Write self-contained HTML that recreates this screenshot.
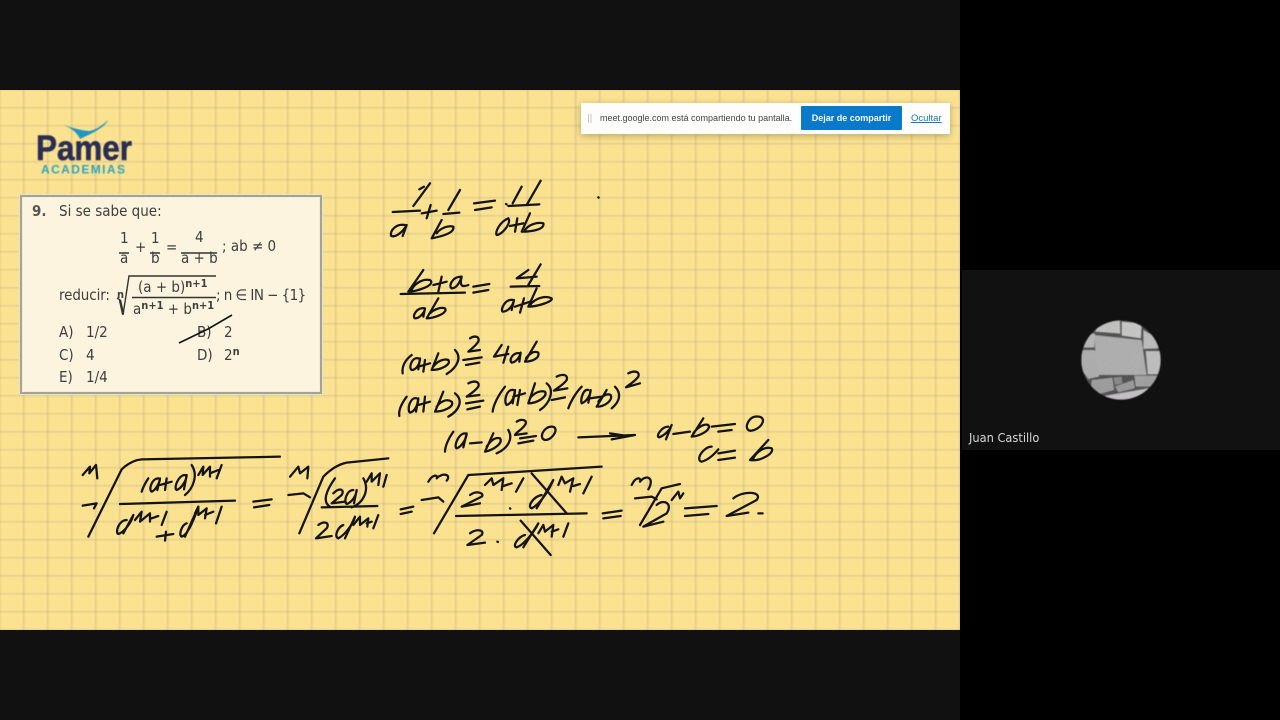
<!DOCTYPE html>
<html lang="es">
<head>
<meta charset="utf-8">
<title>Pamer</title>
<style>
html,body{margin:0;padding:0;width:1280px;height:720px;overflow:hidden;background:#000}
#stage{position:absolute;left:0;top:0;width:1280px;height:720px;background:#000;overflow:hidden}
.abs{position:absolute}
#topbar{left:0;top:0;width:960px;height:90px;background:#111}
#botbar{left:0;top:630px;width:960px;height:90px;background:#111}
#slide{left:0;top:90px;width:960px;height:540px;overflow:hidden;background:#fbe291}
#grid{position:absolute;left:-24px;top:-18px;width:1008px;height:576px;
background-image:linear-gradient(to right,rgba(165,150,125,.3) 0,rgba(165,150,125,.3) 1.500px,transparent 1.500px),linear-gradient(to bottom,rgba(165,150,125,.24) 0,rgba(165,150,125,.24) 1.500px,transparent 1.500px);
background-size:24px 18px;background-position:-1px -1px;filter:blur(.6px)}
#card{left:20px;top:195px;width:298px;height:195px;background:#fcf4de;border:2.500px solid #a4a496;box-shadow:0 0 0 1px #e6e2cc,inset 0 0 0 1px #efeeda}
.t{position:absolute;font-family:"DejaVu Sans Condensed","DejaVu Sans","Liberation Sans",sans-serif;font-stretch:condensed;color:#3e3e3e;font-size:15px;line-height:18px;white-space:nowrap;filter:blur(.35px)}
.sm{font-size:11px;font-weight:bold}
#bar{left:581px;top:103px;width:369px;height:31px;background:#fdfdfb;box-shadow:0 2px 7px rgba(90,80,40,.4);filter:blur(.2px)}
#btn{left:801px;top:106px;width:101px;height:24px;background:#0a79c9;border-radius:1px;color:#f4f8fc;font:bold 9px/24px "Liberation Sans",sans-serif;text-align:center;filter:blur(.2px)}
#msg{left:600px;top:112px;color:#444;font:9px/13px "Liberation Sans",sans-serif;white-space:nowrap;filter:blur(.2px)}
#oc{left:911px;top:112px;color:#1a78b8;font:9.500px/13px "Liberation Sans",sans-serif;text-decoration:underline;filter:blur(.2px)}
#panel{left:962px;top:270px;width:318px;height:180px;background:#111}
#name{left:969px;top:429px;color:#d8d8d8;font:12.700px/17px "DejaVu Sans Condensed","DejaVu Sans","Liberation Sans",sans-serif;font-stretch:condensed;white-space:nowrap;filter:blur(.25px)}
svg{position:absolute;left:0;top:0}
.ink path{fill:none;stroke:#141414;stroke-width:6.8;stroke-linecap:round;stroke-linejoin:round}
</style>
</head>
<body>
<div id="stage">
<div class="abs" id="topbar"></div>
<div class="abs" id="botbar"></div>
<div class="abs" id="slide"><div id="grid"></div></div>

<svg width="1280" height="720" viewBox="0 0 1280 720" style="filter:blur(.4px)">
  <path d="M63 125 C73 128 83 131 90 131 C97 129 103 125 108 120 C105 127 95 132 80 139 C77 132 71 128 63 125Z" fill="#2196c4"/>
  <text x="36" y="160" font-family="Liberation Sans,sans-serif" font-weight="bold" font-size="35" fill="#2a2e54" textLength="96" lengthAdjust="spacingAndGlyphs" stroke="#2a2e54" stroke-width=".6">Pamer</text>
  <text x="41" y="173.500" font-family="Liberation Sans,sans-serif" font-weight="bold" font-size="12" fill="#2ba4c6" textLength="84" lengthAdjust="spacing">ACADEMIAS</text>
</svg>

<div class="abs" id="card"></div>
<div class="t" style="left:32px;top:202px;font-weight:bold;color:#555">9.</div>
<div class="t" style="left:59px;top:202px">Si se sabe que:</div>
<div class="t" style="left:120px;top:229px">1</div>
<div class="t" style="left:120px;top:249px">a</div>
<div class="t" style="left:135px;top:238px">+</div>
<div class="t" style="left:151px;top:229px">1</div>
<div class="t" style="left:151px;top:249px">b</div>
<div class="t" style="left:166px;top:238px">=</div>
<div class="t" style="left:195px;top:228px">4</div>
<div class="t" style="left:181px;top:249px">a + b</div>
<div class="t" style="left:222px;top:237px">; ab ≠ 0</div>
<div class="t" style="left:59px;top:286px;letter-spacing:-.1px">reducir:</div>
<div class="t" style="left:138px;top:278px">(a + b)<span class="sm" style="position:relative;top:-5px">n+1</span></div>
<div class="t" style="left:133px;top:300px">a<span class="sm" style="position:relative;top:-5px">n+1</span> + b<span class="sm" style="position:relative;top:-5px">n+1</span></div>
<div class="t sm" style="left:117px;top:286px">n</div>
<div class="t" style="left:216px;top:286px;letter-spacing:-.55px">; n ∈ IN − {1}</div>
<div class="t" style="left:59px;top:323px">A)</div><div class="t" style="left:86px;top:323px">1/2</div>
<div class="t" style="left:197px;top:323px">B)</div><div class="t" style="left:224px;top:323px">2</div>
<div class="t" style="left:59px;top:346px">C)</div><div class="t" style="left:86px;top:346px">4</div>
<div class="t" style="left:197px;top:346px">D)</div><div class="t" style="left:224px;top:346px">2<span class="sm" style="position:relative;top:-5px">n</span></div>
<div class="t" style="left:59px;top:368px">E)</div><div class="t" style="left:86px;top:368px">1/4</div>

<svg width="1280" height="720" viewBox="0 0 1280 720" style="filter:blur(.3px)">
  <g fill="none" stroke="#333" stroke-width="1.4">
    <path d="M119 253H129M150 253H160M181 253H217"/>
    <path d="M117 298 L120 300 L123 315 L129 276 H216"/>
    <path d="M132 297.500H216"/>
  </g>
  <path d="M120 300 L123 314" fill="none" stroke="#333" stroke-width="2.4"/>
  <path d="M179 343 L208 329 L232 315" fill="none" stroke="#141414" stroke-width="1.6"/>
</svg>

<!-- Handwriting, upper block -->
<svg class="ink" width="1280" height="720" viewBox="0 0 1280 720" style="filter:blur(.35px)">
<g transform="translate(380 170) scale(.33333)">
  <path d="M150 40 L100 108 M132 50 L118 58"/>
  <path d="M38 126 L120 122"/>
  <path d="M75 165 C50 160 30 180 33 197 C45 205 70 185 80 165 L68 198"/>
  <path d="M125 130 L170 122 M152 105 L140 145"/>
  <path d="M240 60 L205 120 M190 132 L238 128"/>
  <path d="M185 150 L155 205 C180 200 225 190 220 170 C205 165 180 175 170 190"/>
  <path d="M282 100 L345 92 M285 120 L335 112"/>
  <path d="M378 102 L380 103"/>
  <path d="M425 50 L398 100 M482 32 L440 105 M385 108 L478 103"/>
  <path d="M385 145 C360 155 345 185 350 195 C365 195 395 160 385 145"/>
  <path d="M390 168 L430 160 M412 145 L405 185"/>
  <path d="M450 130 L425 185 C450 185 495 180 490 160 C470 155 445 165 435 180"/>
  <path d="M655 82 L656 83"/>

  <path d="M130 300 L85 365 C110 365 170 345 150 330 C125 325 100 345 95 360"/>
  <path d="M160 345 L200 335 M185 320 L175 365"/>
  <path d="M245 320 C215 320 205 350 215 355 C230 355 240 335 245 320 C240 340 240 355 265 345"/>
  <path d="M62 372 L255 368"/>
  <path d="M135 415 C110 410 95 440 105 445 C120 445 135 425 135 415 L130 440"/>
  <path d="M175 385 L140 445 C160 445 205 430 195 415 C180 410 160 420 150 430"/>
  <path d="M280 350 L328 342 M280 368 L325 360"/>
  <path d="M445 300 L410 325 L470 320 M482 283 L445 345 M392 350 L478 348"/>
  <path d="M400 390 C375 385 360 420 368 425 C385 425 400 405 402 390 L395 420"/>
  <path d="M405 410 L450 395 M432 385 L420 428"/>
  <path d="M470 355 L445 410 C470 410 520 395 515 385 C495 375 465 385 450 405"/>

  <path d="M95 555 C75 570 65 590 68 610"/>
  <path d="M115 565 C95 560 85 595 95 600 C110 600 120 580 120 565 L115 598"/>
  <path d="M115 590 L150 580 M135 570 L130 605"/>
  <path d="M175 550 L155 600 C180 600 215 585 205 570 C190 565 170 575 160 590"/>
  <path d="M225 540 C245 560 235 590 200 612"/>
  <path d="M270 505 C285 495 300 500 295 515 C285 530 270 540 265 545 L300 540"/>
  <path d="M250 570 L305 562 M258 585 L298 578"/>
  <path d="M365 525 L342 560 L385 552 M385 530 L370 578"/>
  <path d="M420 550 C400 545 385 570 395 578 C410 575 420 560 422 548 L418 575"/>
  <path d="M470 515 L435 575 C455 575 480 565 475 548 C460 540 445 555 438 565"/>

  <path d="M80 680 C65 700 55 720 58 738"/>
  <path d="M110 685 C90 680 80 720 90 728 C105 725 115 700 115 685 L108 725"/>
  <path d="M115 705 L150 695 M135 680 L130 725"/>
  <path d="M190 665 L165 725 C190 725 225 710 215 695 C200 685 180 695 170 710"/>
  <path d="M225 670 C250 690 240 720 205 740"/>
  <path d="M265 640 C285 630 300 635 295 650 C285 665 265 675 260 680 L298 675"/>
  <path d="M258 700 L310 692 M262 718 L300 710"/>
  <path d="M375 650 C355 675 340 705 338 725"/>
  <path d="M400 660 C380 655 370 695 380 705 C395 700 405 680 405 660 L398 700"/>
  <path d="M400 680 L435 670 M420 660 L412 705"/>
  <path d="M465 640 L445 700 C470 700 505 680 495 665 C480 660 460 670 450 685"/>
  <path d="M500 640 C525 660 510 700 480 720"/>
  <path d="M530 620 C550 610 565 615 560 630 C550 645 530 655 522 662 L562 655"/>
  <path d="M515 690 L555 682"/>
  <path d="M605 650 C585 670 570 700 565 715"/>
  <path d="M625 660 C610 655 600 690 605 700 C620 695 632 675 632 660 L625 698"/>
  <path d="M630 685 L665 680"/>
  <path d="M680 660 L650 710 C675 710 700 690 692 675 C680 668 665 680 655 695"/>
  <path d="M705 650 C725 670 720 695 695 715"/>
  <path d="M745 610 C765 600 780 605 775 620 C765 635 745 645 738 652 L780 640"/>
</g>

<!-- Bottom left roots -->
<g transform="translate(70 410) scale(.33333)">
  <path d="M38 195 L60 170 L58 190 L78 165 L82 205"/>
  <path d="M38 287 L80 280 L72 295"/>
  <path d="M55 380 L155 178 Q185 150 215 148 L630 140"/>
  <path d="M235 205 C225 220 218 235 215 245"/>
  <path d="M265 205 C245 205 235 240 245 245 C258 240 270 215 270 205 L262 240"/>
  <path d="M270 225 L305 215 M290 205 L285 240"/>
  <path d="M345 195 C325 195 310 235 320 240 C335 235 350 210 350 195 L342 238"/>
  <path d="M365 165 C385 195 370 235 345 255"/>
  <path d="M385 195 L400 170 L398 195 L420 170 L420 200 M420 190 L445 180 M455 165 L440 205"/>
  <path d="M150 282 L495 272"/>
  <path d="M170 330 C145 330 135 370 145 372 C165 365 185 335 190 315 L160 370"/>
  <path d="M195 330 L215 305 L210 335 L240 310 L240 335 M245 325 L265 318 M290 305 L275 345"/>
  <path d="M260 380 L310 372 M288 365 L285 392"/>
  <path d="M350 340 C335 345 325 375 335 380 C355 375 375 320 385 290 L345 380"/>
  <path d="M375 310 L385 290 L385 315 L410 295 L405 325 M405 315 L430 305 M455 290 L438 340"/>
  <path d="M550 275 L605 268 M552 292 L598 285"/>

  <path d="M660 200 L685 170 L690 190 L715 170 L712 205"/>
  <path d="M655 255 L700 250 L720 262"/>
  <path d="M688 370 L760 200 Q795 165 830 158 L955 145"/>
  <path d="M795 205 C770 240 755 275 780 290"/>
  <path d="M790 250 C810 230 825 240 815 255 L785 280 L825 275"/>
  <path d="M850 240 C830 240 820 275 830 282 C845 278 860 255 860 240 L852 280"/>
  <path d="M880 205 C900 240 880 280 845 292"/>
  <path d="M890 215 L905 190 L905 215 L930 190 L925 225 M950 195 L940 230"/>
  <path d="M755 292 L922 288"/>
  <path d="M745 345 C765 330 780 340 770 355 L738 385 L785 378"/>
  <path d="M820 345 C805 350 790 380 805 385 C825 375 850 340 855 320 L825 385"/>
  <path d="M850 345 L870 320 L870 345 L895 325 L892 350 M890 340 L905 335 M925 315 L910 355"/>
  <path d="M992 298 L1030 290 M992 312 L1025 305"/>
</g>

<!-- Bottom right -->
<g transform="translate(410 410) scale(.33333)">
  <path d="M130 65 C115 85 105 110 105 125"/>
  <path d="M165 70 C145 70 130 110 140 115 C155 110 170 85 170 70 L160 112"/>
  <path d="M180 100 L215 97"/>
  <path d="M250 70 L225 125 C250 120 280 100 270 85 C255 80 240 95 230 110"/>
  <path d="M295 60 C310 85 295 115 260 130"/>
  <path d="M320 35 C335 25 355 30 345 45 C335 60 320 65 315 75 L350 70"/>
  <path d="M330 85 L378 78 M325 100 L370 92"/>
  <path d="M425 50 C400 50 385 85 405 90 C430 90 450 50 425 50"/>
  <path d="M505 82 L675 75 L605 88 M600 70 L640 76"/>
  <path d="M775 50 C755 50 735 80 748 82 C765 75 780 60 785 45 L768 88"/>
  <path d="M790 72 L840 65"/>
  <path d="M880 25 L845 80 C870 78 905 60 895 45 C880 40 860 55 850 70"/>
  <path d="M905 50 L975 42 M925 65 L965 60"/>
  <path d="M1035 20 C1010 25 1000 65 1025 62 C1060 55 1075 15 1035 20"/>
  <path d="M905 110 C880 110 855 150 875 155 C895 150 915 130 925 118"/>
  <path d="M925 130 L975 122 M925 150 L975 143"/>
  <path d="M1075 90 L1020 150 C1050 155 1095 130 1085 115 C1065 108 1040 125 1030 145"/>

  <path d="M55 215 C70 190 85 195 80 205 C100 185 125 195 110 212"/>
  <path d="M35 270 L85 262 L100 275"/>
  <path d="M72 370 L175 195 L575 170"/>
  <path d="M180 255 C200 240 225 250 215 260 L155 290 L210 280"/>
  <path d="M225 225 L245 205 L250 225 L280 205 L275 240 M280 228 L305 220 M340 205 L318 245"/>
  <path d="M300 295 L301 296"/>
  <path d="M395 255 C370 260 350 290 365 295 C385 285 410 255 430 210 L380 295"/>
  <path d="M445 225 L455 200 L465 220 L490 205 L480 245 M490 228 L510 222 M545 200 L520 250"/>
  <path d="M365 190 L470 310"/>
  <path d="M138 318 L530 310"/>
  <path d="M180 370 C200 355 225 360 215 375 L172 405 L225 398"/>
  <path d="M262 395 L264 396"/>
  <path d="M345 375 C325 380 305 410 320 412 C340 405 370 370 385 340 L340 412"/>
  <path d="M385 370 L400 345 L405 365 L430 345 L425 380 M425 365 L445 358 M475 340 L460 380"/>
  <path d="M332 332 L422 435"/>
  <path d="M578 310 L635 302 M580 325 L632 318"/>
  <path d="M665 225 C680 195 695 205 690 215 C710 190 735 205 715 238"/>
  <path d="M675 265 L725 260 L740 268"/>
  <path d="M690 345 L755 235 L810 222"/>
  <path d="M740 285 C760 265 790 280 770 310 L700 350 L760 335"/>
  <path d="M785 270 L805 245 L810 265 L820 250"/>
  <path d="M825 295 L920 288 M825 318 L895 312"/>
  <path d="M970 265 C1000 240 1060 245 1040 270 L950 318 L1015 308"/>
  <path d="M1045 310 L1058 310"/>
</g>
</svg>

<div class="abs" id="bar"></div>
<svg width="1280" height="720" viewBox="0 0 1280 720"><path d="M588.500 114V123M591 114V123" stroke="#c8c8c8" stroke-width="1" fill="none"/></svg>
<div class="abs" id="msg">meet.google.com está compartiendo tu pantalla.</div>
<div class="abs" id="btn">Dejar de compartir</div>
<div class="abs" id="oc">Ocultar</div>

<div class="abs" id="panel"></div>
<svg width="1280" height="720" viewBox="0 0 1280 720" style="filter:blur(.4px)">
  <defs>
    <clipPath id="av"><circle cx="138" cy="135" r="119"/></clipPath>
    <filter id="grain" x="0" y="0" width="100%" height="100%">
      <feTurbulence type="fractalNoise" baseFrequency="0.5" numOctaves="2" seed="4" result="n"/>
      <feColorMatrix in="n" type="matrix" values="0 0 0 0 .25  0 0 0 0 .25  0 0 0 0 .25  .7 .7 0 0 -.55" result="g"/>
      <feComposite in="g" in2="SourceAlpha" operator="in" result="gc"/>
      <feMerge><feMergeNode in="SourceGraphic"/><feMergeNode in="gc"/></feMerge>
    </filter>
  </defs>
  <g transform="translate(1075 315) scale(.33333)" clip-path="url(#av)">
    <g filter="url(#grain)">
      <rect width="276" height="270" fill="#444"/>
      <path d="M58 60 L200 75 L215 180 L65 180Z" fill="#b4b4b4"/>
      <path d="M80 15 L135 15 L136 56 L60 50Z" fill="#c8c8c6"/>
      <path d="M140 20 L200 25 L198 70 L140 62Z" fill="#cececc"/>
      <path d="M205 45 L250 70 L250 100 L205 102Z" fill="#c2c2c2"/>
      <path d="M25 60 L60 55 L58 98 L22 98Z" fill="#bcbcbc"/>
      <path d="M16 105 L60 105 L72 185 L40 192 L16 160Z" fill="#b2b2b2"/>
      <path d="M212 108 L260 108 L260 178 L218 178Z" fill="#c4c4c4"/>
      <path d="M50 195 L112 188 L118 225 L70 238 L48 215Z" fill="#a0a0a0"/>
      <path d="M115 188 L140 185 L142 205 L120 210Z" fill="#8a8a8a"/>
      <path d="M120 214 L175 195 L180 220 L130 232Z" fill="#9c9c9c"/>
      <path d="M178 182 L248 182 L238 215 L182 215Z" fill="#a4a4a4"/>
      <path d="M75 245 L230 218 L200 265 L100 265Z" fill="#cac6ca"/>
    </g>
  </g>
</svg>
<div class="abs" id="name">Juan Castillo</div>
</div>
</body>
</html>
